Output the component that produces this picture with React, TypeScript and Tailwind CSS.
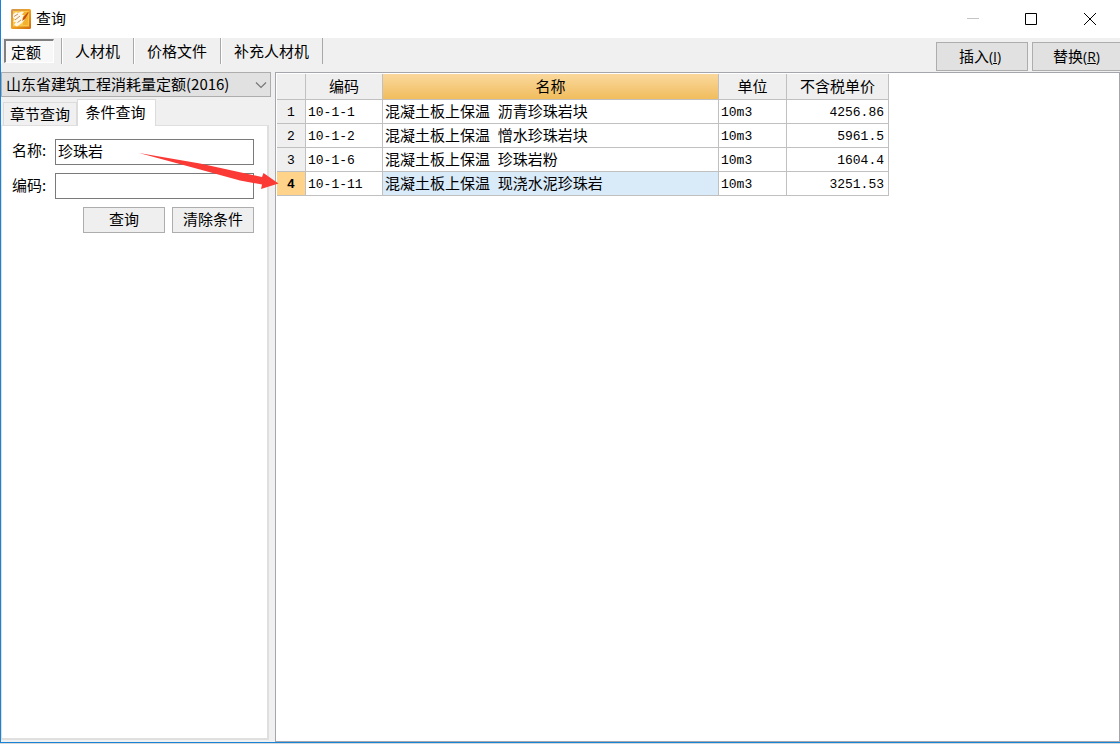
import { Fragment, useState } from "react";
import type { ReactNode } from "react";

const rows = [
  { code: "10-1-1", name: "混凝土板上保温 沥青珍珠岩块", unit: "10m3", price: "4256.86" },
  { code: "10-1-2", name: "混凝土板上保温 憎水珍珠岩块", unit: "10m3", price: "5961.5" },
  { code: "10-1-6", name: "混凝土板上保温 珍珠岩粉", unit: "10m3", price: "1604.4" },
  { code: "10-1-11", name: "混凝土板上保温 现浇水泥珍珠岩", unit: "10m3", price: "3251.53" },
];

const latin = "font-['Liberation_Mono',monospace] text-[13px]";

function AppIcon() {
  return (
    <svg width="20" height="20" viewBox="0 0 20 20" aria-hidden="true">
      <defs>
        <linearGradient id="frame" x1="0" y1="0" x2="1" y2="1">
          <stop offset="0" stopColor="#d0955a" />
          <stop offset="0.5" stopColor="#f0a020" />
          <stop offset="1" stopColor="#cf6a08" />
        </linearGradient>
      </defs>
      <rect width="20" height="20" rx="1.5" fill="url(#frame)" />
      <rect x="2" y="2" width="16" height="15.500" fill="#f9c64e" />
      <path d="M12 3h5v13h-5z" fill="#f2b22e" />
      <path d="M2 5.500 5 3l2 1 4-1.500 2 .5-2.500 3L13 6l-2 4 3 .5-3 3.500-5 3.500L3 16l2-3-3-.5 2-2-2-2z" fill="#fff8e6" />
      <path d="m3 7.500 4-2.500M4 11l5-4M6.500 13.500 10 11" stroke="#b98a55" strokeWidth="0.9" />
      <path d="M17.500 2.500 12.500 8l-1.500 4 3-2 3.500-6z" fill="#c34d12" />
    </svg>
  );
}

function MixedText({ children }: { children: string }) {
  return (
    <>
      {children.split(" ").map((part, i) => (
        <Fragment key={i}>
          {i > 0 && <span className={latin}> </span>}
          {part}
        </Fragment>
      ))}
    </>
  );
}

function ToolTab({ active, onClick, children }: { active: boolean; onClick: () => void; children: ReactNode }) {
  return (
    <div className="flex border-r border-l border-r-[#a8a8a8] border-l-white py-px pr-[7px] pl-0.5">
      <button
        type="button"
        aria-pressed={active}
        onClick={onClick}
        className={
          active
            ? "h-6 border-t-2 border-l-2 border-r border-b border-t-[#808080] border-l-[#808080] border-r-white border-b-white bg-[#f8f8f8] pr-3 pl-[5px]"
            : "h-6 pr-1.5 pl-2.5"
        }
      >
        {children}
      </button>
    </div>
  );
}

function GridHead({ highlight = false, children }: { highlight?: boolean; children?: ReactNode }) {
  return (
    <th
      scope="col"
      className={`h-[26px] border-r border-b border-[#c0c0c0] p-0 pb-0.5 font-normal ${
        highlight ? "bg-linear-to-b from-[#fad89c] to-[#f1bd5c]" : "bg-[#efefef]"
      }`}
    >
      {children}
    </th>
  );
}

export default function App() {
  const [tool, setTool] = useState("定额");
  const [selected, setSelected] = useState(3);
  const [name, setName] = useState("珍珠岩");
  const [code, setCode] = useState("");
  const cell = "h-6 border-r border-b border-[#c0c0c0] pt-0.5 pb-0 leading-4";
  const input = "h-[26px] w-[199px] border border-[#7a7a7a] bg-white px-0.5 pb-1 outline-none";
  const formButton = "h-[26px] w-[82px] border border-[#adadad] bg-[#efefef] pb-0.5";
  const actionButton = "h-[29px] border border-[#adadad] bg-[#e1e1e1]";
  const mnemonic = "font-['Open_Sans',sans-serif] text-[14px]";

  return (
    <div className="flex min-h-screen flex-col bg-[#d8d8d8] pb-px font-['Noto_Sans_CJK_SC',sans-serif] text-[15px] leading-5 text-black">
      <div className="flex grow flex-col border-b border-l border-[#1883d7] bg-[#f0f0f0]">
        <header className="flex h-[38px] items-center bg-white pl-2.5">
          <AppIcon />
          <h1 className="ml-[5px] grow pb-0.5">查询</h1>
          <div className="flex h-full">
            <button type="button" aria-label="最小化" disabled className="grid w-[58px] place-items-center">
              <svg width="12" height="12" viewBox="0 0 12 12"><path d="M0 5.5h12" stroke="#c4c4c4" /></svg>
            </button>
            <button type="button" aria-label="最大化" className="grid w-[58px] place-items-center">
              <svg width="12" height="12" viewBox="0 0 12 12"><path d="M.5.5h11v11H.5z" fill="none" stroke="#000" /></svg>
            </button>
            <button type="button" aria-label="关闭" className="grid w-[60px] place-items-center">
              <svg width="12" height="12" viewBox="0 0 12 12"><path d="m0 0 12 12M12 0 0 12" stroke="#000" /></svg>
            </button>
          </div>
        </header>

        <div className="flex h-[34px] items-start justify-between">
          <nav className="flex">
            {["定额", "人材机", "价格文件", "补充人材机"].map((label) => (
              <ToolTab key={label} active={tool === label} onClick={() => setTool(label)}>
                {label}
              </ToolTab>
            ))}
          </nav>
          <div className="flex gap-1 pt-1">
            <button type="button" className={`${actionButton} w-[92px] pr-1`}>
              插入<span className={mnemonic}>(<u>I</u>)</span>
            </button>
            <button type="button" className={`${actionButton} w-[88px] border-r-0`}>
              替换<span className={mnemonic}>(<u>R</u>)</span>
            </button>
          </div>
        </div>

        <main className="flex grow">
          <aside className="flex w-[274px] shrink-0 flex-col">
            <div className="relative mr-1">
              <select
                aria-label="定额库"
                className="block h-[25px] w-full appearance-none border border-[#adadad] bg-[#e1e1e1] pr-6 pb-0.5 pl-1"
              >
                <option>山东省建筑工程消耗量定额(2016)</option>
              </select>
              <svg className="pointer-events-none absolute top-2.5 right-1" width="12" height="7" viewBox="0 0 12 7">
                <path d="m1 .5 5 5 5-5" fill="none" stroke="#777" strokeWidth="1.2" />
              </svg>
            </div>
            <div role="tablist" className="flex h-7 items-end pt-0.5 pl-0.5">
              <button type="button" role="tab" aria-selected="false" className="h-[23px] w-[74px] border border-b-0 border-[#dcdcdc]">
                章节查询
              </button>
              <button type="button" role="tab" aria-selected="true" className="z-10 -mb-px h-[27px] w-[79px] border border-b-0 border-[#dcdcdc] bg-white pr-0.5 pb-0.5">
                条件查询
              </button>
            </div>
            <form
              className="mr-1.5 mb-0.5 grow border-2 border-t border-l border-[#dfdfdf] bg-white px-2.5 pt-[13px]"
              onSubmit={(e) => e.preventDefault()}
            >
              <div className="flex items-center">
                <label htmlFor="name" className="w-[43px] pb-1">名称:</label>
                <input id="name" value={name} onChange={(e) => setName(e.target.value)} className={input} />
              </div>
              <div className="mt-2 flex items-center">
                <label htmlFor="code" className="w-[43px] pb-0.5">编码:</label>
                <input id="code" value={code} onChange={(e) => setCode(e.target.value)} className={input} />
              </div>
              <div className="mt-2 flex w-[242px] justify-end gap-[7px]">
                <button type="submit" className={formButton}>查询</button>
                <button
                  type="reset"
                  onClick={() => {
                    setName("");
                    setCode("");
                  }}
                  className={formButton}
                >
                  清除条件
                </button>
              </div>
            </form>
          </aside>

          <section className="grow border border-[#a5a6ad] bg-white pt-px pl-px">
            <table className="w-[612px] table-fixed border-separate border-spacing-0">
              <colgroup>
                <col className="w-[29px]" />
                <col className="w-[77px]" />
                <col className="w-[336px]" />
                <col className="w-[68px]" />
                <col className="w-[102px]" />
              </colgroup>
              <thead>
                <tr>
                  <GridHead />
                  <GridHead>编码</GridHead>
                  <GridHead highlight>名称</GridHead>
                  <GridHead>单位</GridHead>
                  <GridHead>不含税单价</GridHead>
                </tr>
              </thead>
              <tbody>
                {rows.map((row, i) => {
                  const on = i === selected;
                  return (
                    <tr key={row.code} onClick={() => setSelected(i)}>
                      <th scope="row" className={`${cell} ${latin} px-0 ${on ? "bg-[#ffd48a] font-bold" : "bg-[#efefef] font-normal"}`}>
                        {i + 1}
                      </th>
                      <td className={`${cell} ${latin} px-0.5`}>{row.code}</td>
                      <td className={`${cell} px-0.5 ${on ? "bg-[#d9eaf8]" : ""}`}>
                        <MixedText>{row.name}</MixedText>
                      </td>
                      <td className={`${cell} ${latin} px-0.5`}>{row.unit}</td>
                      <td className={`${cell} ${latin} px-1 text-right`}>{row.price}</td>
                    </tr>
                  );
                })}
              </tbody>
            </table>
          </section>
        </main>
      </div>

      <svg className="pointer-events-none absolute top-[150px] left-[136px] z-20" width="146" height="44" viewBox="136 150 146 44" aria-hidden="true">
        <path d="M139 153 200 163.500 262 177 263.500 173 278.500 183.500 261 189 262 184.500 240 180.500 200 169.500Z" fill="#fb3a36" />
      </svg>
    </div>
  );
}
